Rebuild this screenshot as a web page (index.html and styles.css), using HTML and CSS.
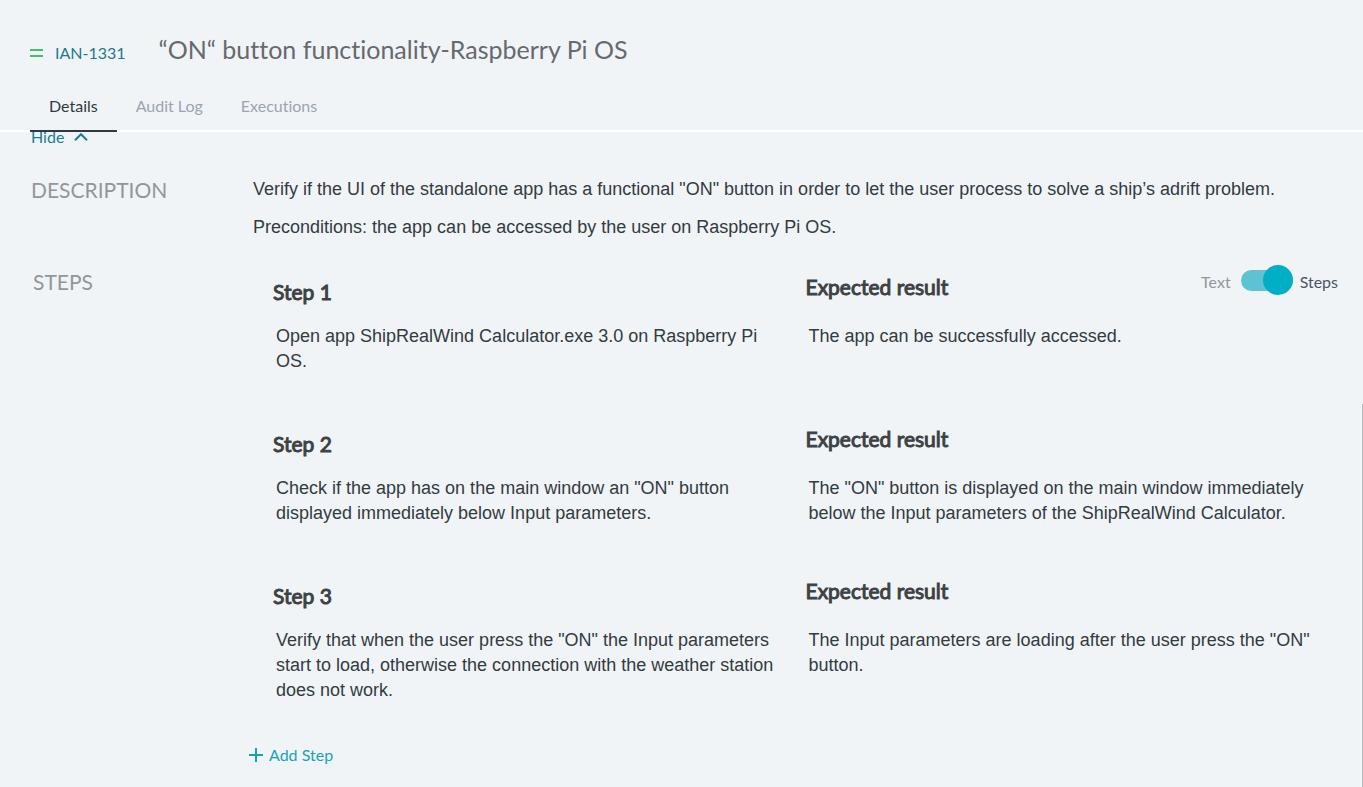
FILE: index.html
```html
<!DOCTYPE html>
<html lang="en">
<head>
<meta charset="utf-8">
<meta name="viewport" content="width=device-width, initial-scale=1">
<title>IAN-1331</title>
<link rel="stylesheet" href="styles.css">
</head>
<body>
<div class="page">
  <header class="header">
    <div class="title-row">
      <svg class="priority" viewBox="0 0 14 8" aria-hidden="true"><path d="M0 1h13M0 7h13"/></svg>
      <a class="issue-key" href="#">IAN-1331</a>
      <h1 class="title">“ON“ button functionality-Raspberry Pi OS</h1>
    </div>
    <nav class="tabs">
      <a class="tab tab-active" href="#">Details</a>
      <a class="tab" href="#">Audit Log</a>
      <a class="tab" href="#">Executions</a>
    </nav>
  </header>
  <main class="content">
    <button class="hide" type="button">Hide
      <svg class="chevron" viewBox="0 0 14 8" aria-hidden="true"><path d="M1 7.200 7 1.200 13 7.200"/></svg>
    </button>
    <section class="section">
      <h2 class="label">DESCRIPTION</h2>
      <div class="description">
        <p>Verify if the UI of the standalone app has a functional "ON" button in order to let the user process to solve a ship’s adrift problem.</p>
        <p>Preconditions: the app can be accessed by the user on Raspberry Pi OS.</p>
      </div>
    </section>
    <section class="section section-steps">
      <h2 class="label label-steps">STEPS</h2>
      <div class="steps">
        <div class="step">
          <div class="cell">
            <h3 class="step-title">Step 1</h3>
            <p class="text">Open app ShipRealWind Calculator.exe 3.0 on Raspberry Pi OS.</p>
          </div>
          <div class="cell">
            <div class="result-head">
              <h3 class="result-title">Expected result</h3>
              <label class="toggle">
                <span class="toggle-off">Text</span>
                <input class="switch" type="checkbox" role="switch" checked>
                <span class="toggle-on">Steps</span>
              </label>
            </div>
            <p class="text">The app can be successfully accessed.</p>
          </div>
        </div>
        <div class="step">
          <div class="cell">
            <h3 class="step-title">Step 2</h3>
            <p class="text">Check if the app has on the main window an "ON" button displayed immediately below Input parameters.</p>
          </div>
          <div class="cell">
            <div class="result-head"><h3 class="result-title">Expected result</h3></div>
            <p class="text">The "ON" button is displayed on the main window immediately below the Input parameters of the ShipRealWind Calculator.</p>
          </div>
        </div>
        <div class="step">
          <div class="cell">
            <h3 class="step-title">Step 3</h3>
            <p class="text">Verify that when the user press the "ON" the Input parameters start to load, otherwise the connection with the weather station does not work.</p>
          </div>
          <div class="cell">
            <div class="result-head"><h3 class="result-title">Expected result</h3></div>
            <p class="text">The Input parameters are loading after the user press the "ON" button.</p>
          </div>
        </div>
        <button class="add" type="button">
          <svg class="plus" viewBox="0 0 14 14" aria-hidden="true"><path d="M7 0v14M0 7h14"/></svg>
          Add Step
        </button>
      </div>
    </section>
  </main>
  <div class="scroll-thumb"></div>
</div>
</body>
</html>
```
FILE: styles.css
```css
* {
  box-sizing: border-box;
}

body {
  margin: 0;
  background: #f0f4f7;
  color: #333b3f;
  font-family: Lato, "Liberation Sans", sans-serif;
  font-size: 16px;
  line-height: 24px;
  font-variant-ligatures: none;
}

h1, h2, h3, p {
  margin: 0;
  font-weight: 400;
}

a {
  text-decoration: none;
}

button {
  display: flex;
  align-items: center;
  padding: 0;
  border: 0;
  background: none;
  font: inherit;
  font-variant-ligatures: none;
  cursor: pointer;
}

svg {
  flex: none;
  fill: none;
  stroke: currentColor;
  stroke-width: 2;
}

.page {
  position: relative;
  min-height: 100vh;
  overflow: hidden;
}

.header {
  position: relative;
  padding: 33px 30px 0;
  border-bottom: 2px solid #fff;
  background: #f0f4f7;
}

.title-row {
  display: flex;
  align-items: baseline;
}

.priority {
  width: 14px;
  height: 8px;
  margin-right: 11px;
  align-self: center;
  margin-top: 8px;
  color: #45bf6e;
}

.issue-key {
  margin-right: 33px;
  color: #20788e;
}

.title {
  color: #66696d;
  font-size: 25px;
  line-height: 32px;
}

.tabs {
  display: flex;
  margin-top: 17px;
  margin-bottom: -2px;
}

.tab {
  padding: 12px 19px;
  border-bottom: 2px solid transparent;
  color: #9ca3b2;
}

.tab-active {
  border-color: #303940;
  color: #303940;
}

.content {
  padding: 0 25px 0 31px;
}

.hide {
  gap: 10px;
  margin-top: -7px;
  color: #1b7c8f;
}

.chevron {
  width: 14px;
  height: 8px;
}

.section {
  display: grid;
  grid-template-columns: 222px minmax(0, 1fr);
  margin-top: 28px;
}

.section-steps {
  margin-top: 24px;
}

.label {
  color: #939699;
  font-size: 21px;
  line-height: 26px;
}

.label-steps {
  padding: 5px 0 0 2px;
}

.description {
  display: grid;
  gap: 13px;
  font: 18px/25px "Liberation Sans", Arial, sans-serif;
}

.step {
  display: grid;
  grid-template-columns: 1fr 1fr;
  min-height: 152px;
  padding-left: 20px;
}

.step-title,
.result-title {
  color: #3d4144;
  font-size: 21px;
  line-height: 28px;
  -webkit-text-stroke: 1px currentColor;
}

.step-title {
  padding: 14px 0 18px;
}

.result-head {
  display: flex;
  justify-content: space-between;
  align-items: flex-start;
  height: 60px;
}

.result-title {
  padding-top: 9px;
}

.text {
  padding: 0 24px 0 3px;
  font: 18px/25px "Liberation Sans", Arial, sans-serif;
}

.toggle {
  display: flex;
  align-items: center;
  padding-top: 2px;
}

.toggle-off,
.toggle-on {
  padding-top: 4px;
}

.toggle-off {
  color: #939699;
}

.toggle-on {
  color: #4c5563;
}

.switch {
  display: flex;
  align-items: center;
  justify-content: flex-end;
  width: 52px;
  height: 21px;
  margin: 0 7px 0 10px;
  border-radius: 11px;
  background: #5dc3d2;
  appearance: none;
}

.switch::before {
  content: "";
  flex: none;
  width: 30px;
  height: 30px;
  border-radius: 50%;
  background: #00aec5;
}

.add {
  gap: 6px;
  margin: 23px 0 20px -4px;
  color: #18a2b5;
}

.plus {
  width: 14px;
  height: 14px;
}

.scroll-thumb {
  position: absolute;
  top: 404px;
  right: 0;
  bottom: 0;
  width: 1px;
  background: #b7babd;
}
```
